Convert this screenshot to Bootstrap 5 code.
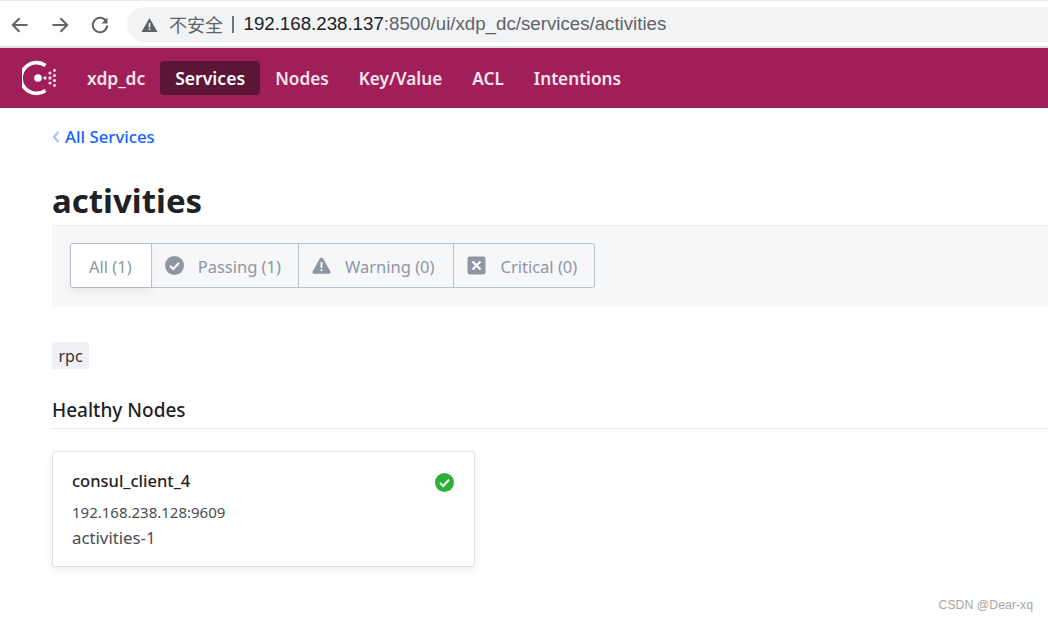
<!DOCTYPE html>
<html lang="zh">
<head>
<meta charset="utf-8">
<title>activities</title>
<link href="https://cdn.jsdelivr.net/npm/bootstrap@5.3.0/dist/css/bootstrap.min.css" rel="stylesheet">
<style>
html,body{height:621px;overflow:hidden;background:#fff}
body{font-family:"Noto Sans","Noto Sans CJK SC",sans-serif;color:#1f2124;position:relative}
.chrome-bar{height:48px;padding-top:6px;background:#fff;border-top:1px solid #e6e8eb;border-bottom:2px solid #dfe1e5;box-sizing:border-box}
.chrome-tools{width:127px;height:36px;padding-left:10px;gap:20px}
.chrome-tools svg{width:20px;height:20px}
.omnibox{height:35px;width:100%;margin-right:-1px;background:#f1f3f4;border-radius:18px 0 0 18px;padding-left:14px;font-family:"Liberation Sans",Arial,sans-serif;font-size:18.7px;color:#5f6368;white-space:nowrap}
.omnibox b{font-weight:400;color:#202124}
.omni-warn{font-family:"Noto Sans CJK SC",sans-serif;font-size:18px;margin-left:11px}
.omni-sep{margin:0 10px 0 9px;width:1.5px;height:17px;background:#70757a}
.consul-nav{height:60px;background:#a11f58;padding-left:22px}
.consul-logo{width:36px;height:36px;margin-right:21px}
.nav-entry{height:34px;padding:0 15px;border-radius:4px;font-size:17.2px;font-weight:600;color:#f6e3ec;line-height:35px}
.nav-entry.is-dc{padding:0 15px 0 8px;font-size:17.4px}
.nav-entry.is-on{background:#5b1537;color:#fff;font-size:17.6px}
.page-main{padding-left:52px}
.crumb{height:20px;margin-top:19px;font-size:16.8px;line-height:20px;color:#1563ff;gap:5px;font-weight:500}
.page-title{margin:31px 0 0;font-size:33px;line-height:46px;font-weight:700;color:#1f2124;height:47px}
.filter-strip{height:81px;background:#f6f7f9;border-top:1px solid #ebedf0;padding:17px 18px}
.seg-group{height:45px;border:1px solid #bac1cc;border-radius:3px;width:max-content}
.seg-item{height:100%;font-size:16.5px;color:#8e96a3;padding:4px 17px 0 13px;gap:14px;border-left:1px solid #bac1cc}
.seg-item:first-child{border-left:0;background:#fff;padding:4px 19px 0 18px;border-radius:3px 0 0 3px;box-shadow:0 4px 8px rgba(31,33,36,.08)}
.seg-item:nth-child(3){padding-right:19px}
.seg-item svg{width:19px;height:19px;margin-top:-5px}
.tag-chip{display:inline-block;height:27px;margin-top:36px;padding:0 6.500px;line-height:29px;background:#eff1f5;border-radius:1px;font-size:16px;color:#333}
.sect-title{margin:28px 0 0;height:32px;font-size:19px;font-weight:500;line-height:26px;border-bottom:1px solid #e4e6ea;color:#1f2124}
.node-box{width:423px;height:116px;margin-top:22px;padding:17px 20px 17px 19px;background:#fff;border:1px solid #e0e2e8;border-radius:3px;box-shadow:0 3px 8px rgba(31,33,36,.08)}
.node-name{font-size:16.500px;font-weight:500;line-height:24px;color:#1f2124}
.node-ok{width:19px;height:19px;margin-top:4px}
.node-addr{font-size:15px;line-height:20px;margin-top:9px;color:#4a4d52}
.node-svc{font-size:16.800px;line-height:22px;margin-top:5px;color:#4a4d52}
.wm{position:absolute;right:15px;top:597px;font-family:"Liberation Sans",Arial,sans-serif;font-size:12.3px;color:#a6a6a6;line-height:16px}
</style>
</head>
<body>
<div class="chrome-bar d-flex">
  <div class="chrome-tools d-flex align-items-center flex-shrink-0">
    <svg viewBox="0 0 20 20" fill="none" stroke="#5f6368" stroke-width="2"><path d="M17.500 10H3M9.500 3.200 2.800 10l6.700 6.800"/></svg>
    <svg viewBox="0 0 20 20" fill="none" stroke="#5f6368" stroke-width="2"><path d="M2.500 10H17M10.500 3.200 17.200 10l-6.700 6.800"/></svg>
    <svg viewBox="0 0 20 20" fill="none" stroke="#5f6368" stroke-width="2"><path d="M16.300 6.500A7.200 7.200 0 1 0 17.200 10.500"/><path d="M17.500 2.500v6h-6" fill="#5f6368" stroke="none"/></svg>
  </div>
  <div class="omnibox d-flex align-items-center">
    <svg width="17" height="16" viewBox="0 0 17 16"><path d="M8.500 1 16.500 15H.5z" fill="#5f6368"/><path d="M7.700 6h1.600v4.500H7.700zM7.700 11.500h1.600v1.600H7.700z" fill="#f1f3f4"/></svg>
    <span class="omni-warn">不安全</span><span class="omni-sep"></span><span><b>192.168.238.137</b>:8500/ui/xdp_dc/services/activities</span>
  </div>
</div>
<nav class="consul-nav d-flex align-items-center">
  <svg class="consul-logo" viewBox="0 0 36 36"><path d="M23.500 5.500A15.400 15.400 0 1 0 23.500 30.500" fill="none" stroke="#fff" stroke-width="3.600"/><circle cx="16" cy="18" r="3.800" fill="#fff"/><g fill="#f6dbe7"><circle cx="23" cy="18" r="1.700"/><circle cx="28" cy="18" r="1.700"/><circle cx="32.500" cy="15.500" r="1.600"/><circle cx="32.500" cy="20.500" r="1.600"/><circle cx="28" cy="13" r="1.600"/><circle cx="28" cy="23" r="1.600"/><circle cx="32.500" cy="10.500" r="1.400"/><circle cx="32.500" cy="25.500" r="1.400"/></g></svg>
  <a class="nav-entry is-dc text-decoration-none">xdp_dc</a>
  <a class="nav-entry is-on text-decoration-none">Services</a>
  <a class="nav-entry text-decoration-none">Nodes</a>
  <a class="nav-entry text-decoration-none">Key/Value</a>
  <a class="nav-entry text-decoration-none">ACL</a>
  <a class="nav-entry text-decoration-none">Intentions</a>
</nav>
<main class="page-main">
  <div class="crumb d-flex align-items-center">
    <svg width="8" height="12" viewBox="0 0 8 12" fill="none" stroke="#a5c3ff" stroke-width="2.200"><path d="M6.500 1 2 6l4.500 5"/></svg>
    <span>All Services</span>
  </div>
  <h1 class="page-title">activities</h1>
  <div class="filter-strip">
    <div class="seg-group d-flex">
      <div class="seg-item d-flex align-items-center">All (1)</div>
      <div class="seg-item d-flex align-items-center">
        <svg viewBox="0 0 19 19"><circle cx="9.500" cy="9.500" r="9.500" fill="#8e96a3"/><path d="M5 10l3.200 3L14 6.700" fill="none" stroke="#fff" stroke-width="2"/></svg>Passing (1)</div>
      <div class="seg-item d-flex align-items-center">
        <svg viewBox="0 0 19 19"><path d="M9.500 1.500c.7 0 1.200.4 1.600 1l7.300 13c.6 1.100-.1 2.200-1.300 2.200H1.900c-1.200 0-1.900-1.100-1.300-2.200l7.300-13c.4-.6.900-1 1.600-1z" fill="#8e96a3"/><path d="M8.600 6h1.800v6H8.600zM8.600 13.200h1.800V15H8.600z" fill="#fff"/></svg>Warning (0)</div>
      <div class="seg-item d-flex align-items-center">
        <svg viewBox="0 0 19 19"><rect x=".5" y=".5" width="18" height="18" rx="2.500" fill="#8e96a3"/><path d="M5.500 5.500l8 8M13.500 5.500l-8 8" stroke="#fff" stroke-width="2.300"/></svg>Critical (0)</div>
    </div>
  </div>
  <span class="tag-chip">rpc</span>
  <h2 class="sect-title">Healthy Nodes</h2>
  <div class="node-box">
    <div class="d-flex justify-content-between">
      <span class="node-name">consul_client_4</span>
      <svg class="node-ok" viewBox="0 0 19 19"><circle cx="9.500" cy="9.500" r="9.500" fill="#2eb039"/><path d="M5 10l3.200 3L14 6.700" fill="none" stroke="#fff" stroke-width="2"/></svg>
    </div>
    <div class="node-addr">192.168.238.128:9609</div>
    <div class="node-svc">activities-1</div>
  </div>
</main>
<div class="wm">CSDN @Dear-xq</div>
<script src="https://cdn.jsdelivr.net/npm/bootstrap@5.3.0/dist/js/bootstrap.bundle.min.js"></script>
</body>
</html>
